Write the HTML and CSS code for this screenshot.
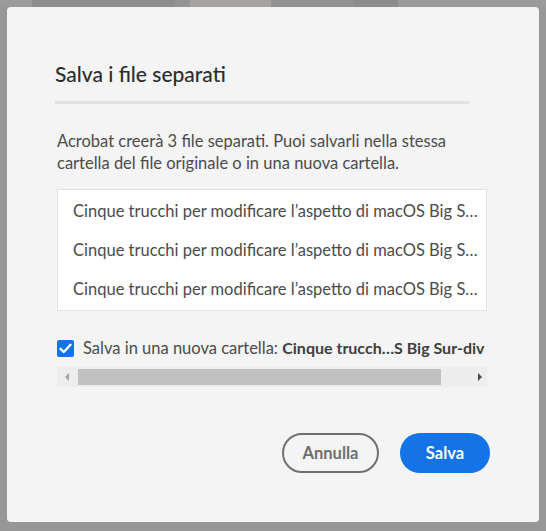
FILE: index.html
```html
<!DOCTYPE html>
<html lang="it">
<head>
<meta charset="utf-8">
<link rel="stylesheet" href="styles.css">
</head>
<body>
<div class="backdrop">
  <div class="bg-strip">
    <span class="seg s1"></span><span class="seg s2"></span><span class="seg s3"></span><span class="seg s4"></span><span class="seg s5"></span><span class="seg s6"></span><span class="seg s7"></span>
  </div>
  <div class="dialog">
    <h1 class="title">Salva i file separati</h1>
    <div class="divider"></div>
    <p class="desc">Acrobat creerà 3 file separati. Puoi salvarli nella stessa<br>cartella del file originale o in una nuova cartella.</p>
    <ul class="file-list">
      <li class="file-row">Cinque trucchi per modificare l’aspetto di macOS Big S…</li>
      <li class="file-row">Cinque trucchi per modificare l’aspetto di macOS Big S…</li>
      <li class="file-row">Cinque trucchi per modificare l’aspetto di macOS Big S…</li>
    </ul>
    <div class="check-row">
      <span class="checkbox"><svg width="13" height="11" viewBox="0 0 13 11"><path d="M1.5 5.8 L4.8 9 L11.5 1.8" fill="none" stroke="#fff" stroke-width="2.4" stroke-linecap="round" stroke-linejoin="round"/></svg></span>
      <span class="check-label">Salva in una nuova cartella: <b>Cinque trucch…S Big Sur-div</b></span>
    </div>
    <div class="hscroll">
      <span class="arrow-left"></span>
      <span class="thumb"></span>
      <span class="arrow-right"></span>
    </div>
    <div class="actions">
      <button class="btn btn-secondary">Annulla</button>
      <button class="btn btn-primary">Salva</button>
    </div>
  </div>
</div>
</body>
</html>
```

FILE: styles.css
```css
html, body {
  margin: 0;
  padding: 0;
}
body {
  width: 546px;
  height: 531px;
  overflow: hidden;
  font-family: "Lato", "Noto Sans", sans-serif;
}
.backdrop {
  position: relative;
  width: 546px;
  height: 531px;
  background: #979797;
  padding: 7px;
  box-sizing: border-box;
}
.bg-strip {
  position: absolute;
  top: 0;
  left: 0;
  right: 0;
  height: 7px;
  display: flex;
}
.seg { height: 7px; display: block; }
.s1 { width: 32px; background: #9b9b9b; }
.s2 { width: 143px; background: #8d8d8d; }
.s3 { width: 15px; background: #939393; }
.s4 { width: 81px; background: #a5a2a0; }
.s5 { width: 83px; background: #929292; }
.s6 { width: 44px; background: #8c8c8c; }
.s7 { flex: 1; background: #9a9a9a; }
.dialog {
  position: relative;
  width: 532px;
  height: 515px;
  box-sizing: border-box;
  background: #f4f4f4;
  border-radius: 4px;
  padding: 55px 49px 0 48px;
}
.title {
  margin: 0;
  font-size: 21px;
  line-height: 24px;
  font-weight: 500;
  color: #2c2c2c;
}
.divider {
  width: 414px;
  height: 3px;
  background: #e1e1e1;
  margin-top: 15px;
}
.desc {
  margin: 26px 0 0 2px;
  font-size: 16.5px;
  line-height: 22px;
  color: #4b4b4b;
  width: 430px;
  white-space: nowrap;
}
.file-list {
  list-style: none;
  margin: 15px 0 0 2px;
  padding: 2px 0;
  width: 430px;
  height: 122px;
  box-sizing: border-box;
  background: #ffffff;
  border: 1px solid #e2e2e2;
}
.file-row {
  height: 39px;
  line-height: 39px;
  padding: 0 10px 0 15px;
  font-size: 16.5px;
  color: #4b4b4b;
  white-space: nowrap;
}
.check-row {
  display: flex;
  align-items: center;
  margin: 27px 0 0 2px;
  width: 432px;
  height: 20px;
  white-space: nowrap;
}
.checkbox {
  flex: none;
  width: 17px;
  height: 17px;
  border-radius: 2px;
  background: #1473e6;
  display: flex;
  align-items: center;
  justify-content: center;
}
.check-label {
  margin-left: 9px;
  font-size: 16.5px;
  color: #4b4b4b;
}
.check-label b {
  font-size: 16px;
  font-weight: 700;
  color: #3e3e3e;
}
.hscroll {
  margin: 9px 0 0 2px;
  width: 430px;
  height: 20px;
  background: #ededed;
  display: flex;
  align-items: center;
}
.arrow-left {
  width: 0;
  height: 0;
  border-top: 4px solid transparent;
  border-bottom: 4px solid transparent;
  border-right: 4px solid #a3a3a3;
  margin-left: 8px;
}
.thumb {
  margin-left: 9px;
  width: 363px;
  height: 16px;
  background: #c1c1c1;
}
.arrow-right {
  width: 0;
  height: 0;
  border-top: 4px solid transparent;
  border-bottom: 4px solid transparent;
  border-left: 4px solid #4a4a4a;
  margin-left: 37px;
}
.actions {
  display: flex;
  justify-content: flex-end;
  gap: 21px;
  margin-top: 46px;
  width: 435px;
}
.btn {
  font-family: inherit;
  font-size: 16.5px;
  font-weight: 700;
  height: 40px;
  border-radius: 20px;
  box-sizing: border-box;
  cursor: pointer;
}
.btn-secondary {
  width: 97px;
  background: transparent;
  border: 2px solid #707070;
  color: #6e6e6e;
}
.btn-primary {
  width: 90px;
  background: #1473e6;
  border: none;
  color: #ffffff;
}
```
